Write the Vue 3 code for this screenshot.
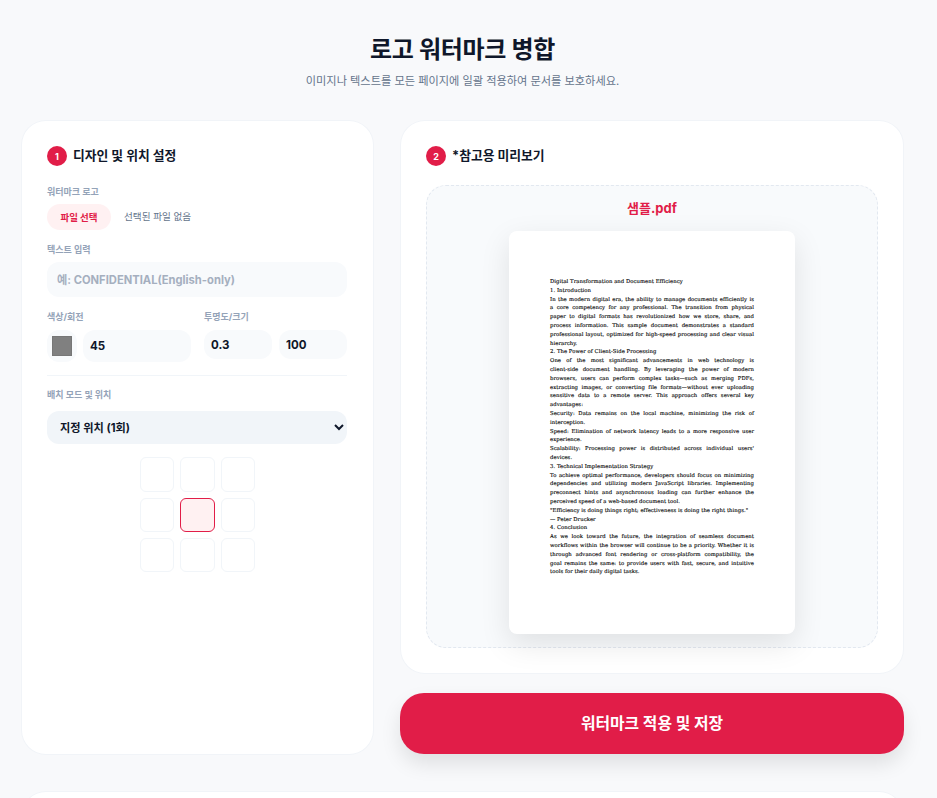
<script setup>
import { ref } from 'vue'

const activeCell = ref(4)
const cells = [0, 1, 2, 3, 4, 5, 6, 7, 8]

const docLines = [
  { text: 'Digital Transformation and Document Efficiency' },
  { text: '1. Introduction' },
  { text: 'In the modern digital era, the ability to manage documents efficiently is', full: true },
  { text: 'a core competency for any professional. The transition from physical', full: true },
  { text: 'paper to digital formats has revolutionized how we store, share, and', full: true },
  { text: 'process information. This sample document demonstrates a standard', full: true },
  { text: 'professional layout, optimized for high-speed processing and clear visual', full: true },
  { text: 'hierarchy.' },
  { text: '2. The Power of Client-Side Processing' },
  { text: 'One of the most significant advancements in web technology is', full: true },
  { text: 'client-side document handling. By leveraging the power of modern', full: true },
  { text: 'browsers, users can perform complex tasks—such as merging PDFs,', full: true },
  { text: 'extracting images, or converting file formats—without ever uploading', full: true },
  { text: 'sensitive data to a remote server. This approach offers several key', full: true },
  { text: 'advantages:' },
  { text: 'Security: Data remains on the local machine, minimizing the risk of', full: true },
  { text: 'interception.' },
  { text: 'Speed: Elimination of network latency leads to a more responsive user', full: true },
  { text: 'experience.' },
  { text: "Scalability: Processing power is distributed across individual users'", full: true },
  { text: 'devices.' },
  { text: '3. Technical Implementation Strategy' },
  { text: 'To achieve optimal performance, developers should focus on minimizing', full: true },
  { text: 'dependencies and utilizing modern JavaScript libraries. Implementing', full: true },
  { text: 'preconnect hints and asynchronous loading can further enhance the', full: true },
  { text: 'perceived speed of a web-based document tool.' },
  { text: '"Efficiency is doing things right; effectiveness is doing the right things."' },
  { text: '— Peter Drucker' },
  { text: '4. Conclusion' },
  { text: 'As we look toward the future, the integration of seamless document', full: true },
  { text: 'workflows within the browser will continue to be a priority. Whether it is', full: true },
  { text: 'through advanced font rendering or cross-platform compatibility, the', full: true },
  { text: 'goal remains the same: to provide users with fast, secure, and intuitive', full: true },
  { text: 'tools for their daily digital tasks.' }
]
</script>

<template>
  <div class="page">
    <header class="head">
      <h1>로고 워터마크 병합</h1>
      <p>이미지나 텍스트를 모든 페이지에 일괄 적용하여 문서를 보호하세요.</p>
    </header>

    <div class="layout">
      <section class="card settings">
        <h2 class="step"><span class="badge">1</span><span class="step-text">디자인 및 위치 설정</span></h2>

        <label class="label">워터마크 로고</label>
        <div class="file-row">
          <button class="file-btn" type="button">파일 선택</button>
          <span class="file-name">선택된 파일 없음</span>
        </div>

        <label class="label">텍스트 입력</label>
        <input class="field text-field" type="text" placeholder="예: CONFIDENTIAL(English-only)" />

        <div class="two-col">
          <div>
            <label class="label tall">색상/회전</label>
            <div class="color-row">
              <input class="color" type="color" value="#808080" />
              <input class="field rotate" type="text" value="45" />
            </div>
          </div>
          <div>
            <label class="label tall">투명도/크기</label>
            <div class="pair-row">
              <input class="field small" type="text" value="0.3" />
              <input class="field small" type="text" value="100" />
            </div>
          </div>
        </div>

        <hr class="divider" />

        <label class="label wide">배치 모드 및 위치</label>
        <select class="mode">
          <option>지정 위치 (1회)</option>
          <option>바둑판 배열</option>
        </select>

        <div class="grid">
          <button
            v-for="cell in cells"
            :key="cell"
            type="button"
            class="cell"
            :class="{ active: activeCell === cell }"
            @click="activeCell = cell"
          ></button>
        </div>
      </section>

      <div class="right">
        <section class="card preview-card">
          <h2 class="step"><span class="badge">2</span><span class="step-text">*참고용 미리보기</span></h2>
          <div class="preview">
            <div class="doc-name">샘플.pdf</div>
            <div class="doc">
              <div
                v-for="(line, i) in docLines"
                :key="i"
                class="doc-line"
                :class="{ full: line.full }"
              >{{ line.text }}</div>
            </div>
          </div>
        </section>
        <button class="apply" type="button">워터마크 적용 및 저장</button>
      </div>
    </div>

    <section class="card lower"></section>
  </div>
</template>

<style>
html,
body {
  margin: 0;
  background: #f8f9fb;
  overflow: hidden;
}
</style>

<style scoped>
.page {
  box-sizing: border-box;
  width: 925px;
  height: 798px;
  overflow: hidden;
  padding: 0 22px;
  font-family: Inter, "Noto Sans CJK KR", sans-serif;
  color: #0f172a;
}

.head {
  text-align: center;
  padding-top: 34px;
  height: 87px;
}

.head h1 {
  margin: 0;
  font-size: 24px;
  line-height: 32px;
  font-weight: 700;
  letter-spacing: -0.3px;
}

.head p {
  margin: 6px 0 0;
  font-size: 11.2px;
  line-height: 18px;
  color: #64748b;
}

.layout {
  display: grid;
  grid-template-columns: 351px 502px;
  gap: 28px;
}

.card {
  background: #fff;
  border-radius: 24px;
  box-shadow: 0 0 0 1px #f1f4f8;
  box-sizing: border-box;
}

.settings {
  padding: 25px 26px 25px 25px;
}

.step {
  display: flex;
  align-items: center;
  gap: 6px;
  margin: 0;
  height: 20px;
  font-size: 12.8px;
  font-weight: 700;
}

.step-text {
  margin-top: -3px;
}

.badge {
  width: 20px;
  height: 20px;
  border-radius: 50%;
  background: #e11d48;
  color: #fff;
  font-size: 9px;
  font-weight: 700;
  display: flex;
  align-items: center;
  justify-content: center;
}

.label {
  display: block;
  font-size: 9px;
  line-height: 14px;
  font-weight: 700;
  color: #94a3b8;
  margin-bottom: 5px;
}

.label.tall {
  margin-bottom: 6px;
}

.label.wide {
  margin-bottom: 9px;
}

.settings > .step {
  margin-bottom: 19px;
}

.file-row {
  display: flex;
  align-items: center;
  gap: 13px;
  margin-bottom: 13px;
}

.file-btn {
  width: 64px;
  height: 26px;
  border: none;
  padding: 0 0 1px;
  border-radius: 13px;
  background: #fff1f2;
  color: #e11d48;
  font: 700 9.5px Inter, "Noto Sans CJK KR", sans-serif;
}

.file-name {
  margin-top: -2px;
  font-size: 9.6px;
  color: #64748b;
}

.field {
  box-sizing: border-box;
  border: none;
  outline: none;
  background: #f8fafc;
  border-radius: 12px;
  font: 700 11.5px Inter, "Noto Sans CJK KR", sans-serif;
  color: #0f172a;
}

.text-field {
  display: block;
  width: 100%;
  height: 35px;
  padding: 0 10px;
  margin-bottom: 13px;
  font-size: 11.2px;
}

.text-field::placeholder {
  color: #a5afbf;
  opacity: 1;
}

.two-col {
  display: grid;
  grid-template-columns: 144px 143px;
  gap: 13px;
}

.color-row {
  display: flex;
  gap: 6px;
}

.color {
  box-sizing: border-box;
  width: 30px;
  height: 32px;
  padding: 6px 5px;
  border: none;
  border-radius: 12px;
  background: #f8fafc;
}

.color::-webkit-color-swatch-wrapper {
  padding: 0;
}

.color::-webkit-color-swatch {
  border: 1px solid #777;
  border-radius: 0;
}

.rotate {
  width: 108px;
  height: 32px;
  padding: 0 7px;
}

.pair-row {
  display: flex;
  gap: 7px;
}

.small {
  width: 68px;
  height: 29px;
  padding: 0 7px;
}

.divider {
  border: none;
  border-top: 1px solid #f1f5f9;
  margin: 13px 0 12px;
}

.mode {
  display: block;
  width: 100%;
  height: 33px;
  border: none;
  outline: none;
  padding: 0 9px;
  border-radius: 12px;
  background: #f1f5f9;
  color: #0f172a;
  font: 700 11.2px Inter, "Noto Sans CJK KR", sans-serif;
}

.grid {
  display: grid;
  grid-template-columns: repeat(3, 1fr);
  gap: 6px;
  width: 115px;
  margin: 13.4px 0 0 93px;
}

.cell {
  box-sizing: border-box;
  aspect-ratio: 1;
  padding: 0;
  background: #fff;
  border: 1px solid #f1f5f9;
  border-radius: 6px;
}

.cell.active {
  background: #fff1f2;
  border-color: #e11d48;
}

.right {
  display: flex;
  flex-direction: column;
  gap: 20px;
}

.preview-card {
  padding: 25px 25px 25px;
}

.preview {
  box-sizing: border-box;
  height: 463px;
  margin-top: 19px;
  background: #f8fafc;
  border: 1px dashed #e2e8f0;
  border-radius: 20px;
  display: flex;
  flex-direction: column;
  align-items: center;
}

.doc-name {
  margin-top: 13px;
  font-size: 13px;
  line-height: 18px;
  font-weight: 700;
  color: #e11d48;
}

.doc {
  box-sizing: border-box;
  width: 286px;
  height: 403px;
  margin-top: 14px;
  padding: 46px 41px 0;
  background: #fff;
  border-radius: 8px;
  box-shadow: 0 10px 30px rgba(0, 0, 0, 0.1);
  font-family: "DejaVu Serif", serif;
  font-size: 5.3px;
  line-height: 8.79px;
  letter-spacing: 0.05px;
  color: #000;
  -webkit-text-stroke: 0.12px #000;
}

.doc-line {
  white-space: nowrap;
}

.doc-line.full {
  white-space: normal;
  text-align: justify;
  text-align-last: justify;
}

.apply {
  width: 504px;
  height: 61px;
  margin: 0 -1px;
  padding: 0 0 3px;
  border: none;
  border-radius: 24px;
  background: #e11d48;
  color: #fff;
  font: 700 15.8px Inter, "Noto Sans CJK KR", sans-serif;
  box-shadow: 0 10px 20px rgba(0, 0, 0, 0.1);
}

.lower {
  height: 120px;
  margin-top: 38px;
}
</style>
